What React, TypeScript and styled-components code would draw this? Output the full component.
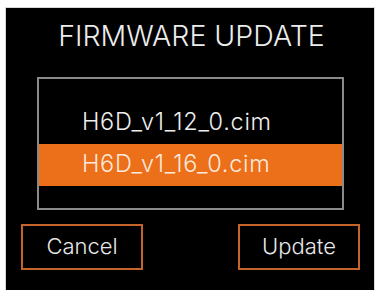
import React from "react";
import styled, { createGlobalStyle } from "styled-components";

const Global = createGlobalStyle`
  html, body { margin: 0; padding: 0; background: #ffffff; }
  body { font-family: Inter, "Liberation Sans", Arial, sans-serif; }
`;

const Page = styled.div`
  padding: 8px 0 0 6px;
`;

const Panel = styled.div`
  box-sizing: border-box;
  width: 368px;
  height: 282px;
  background: #000;
  box-shadow: 0 0 0 1px #d8d8d8;
  display: flex;
  flex-direction: column;
  padding: 0 14px 0 15px;
`;

const Title = styled.div`
  height: 69px;
  box-sizing: border-box;
  padding-top: 12px;
  padding-left: 2px;
  text-align: center;
  font-size: 28.5px;
  line-height: 32px;
  font-weight: 300;
  color: #ececec;
  letter-spacing: 0px;
`;

const List = styled.div`
  align-self: center;
  box-sizing: border-box;
  width: 307px;
  height: 133px;
  border: 2px solid #8a8a8a;
  padding-top: 23px;
  display: flex;
  flex-direction: column;
`;

const Row = styled.div<{ $selected?: boolean }>`
  height: 42px;
  display: flex;
  align-items: center;
  padding-left: 43px;
  padding-bottom: 4px;
  box-sizing: border-box;
  background: ${(p) => (p.$selected ? "#ec6f1a" : "transparent")};
  color: ${(p) => (p.$selected ? "#fbe9dc" : "#eeeeee")};
  font-size: 23.5px;
  font-weight: 300;
  letter-spacing: 0.7px;
`;

const Buttons = styled.div`
  margin-top: 14px;
  display: flex;
  justify-content: space-between;
`;

const Button = styled.button`
  box-sizing: border-box;
  width: 122px;
  height: 46px;
  background: #000;
  border: 2px solid #c4642a;
  color: #e8e8e8;
  font-family: Inter, "Liberation Sans", Arial, sans-serif;
  font-size: 22px;
  font-weight: 300;
  padding: 0 0 2px 0;
  cursor: pointer;
`;

const files = [
  { name: "H6D_v1_12_0.cim", selected: false },
  { name: "H6D_v1_16_0.cim", selected: true },
];

export default function App() {
  return (
    <>
      <Global />
      <Page>
        <Panel>
          <Title>FIRMWARE UPDATE</Title>
          <List>
            {files.map((f) => (
              <Row key={f.name} $selected={f.selected}>
                {f.name}
              </Row>
            ))}
          </List>
          <Buttons>
            <Button>Cancel</Button>
            <Button>Update</Button>
          </Buttons>
        </Panel>
      </Page>
    </>
  );
}
